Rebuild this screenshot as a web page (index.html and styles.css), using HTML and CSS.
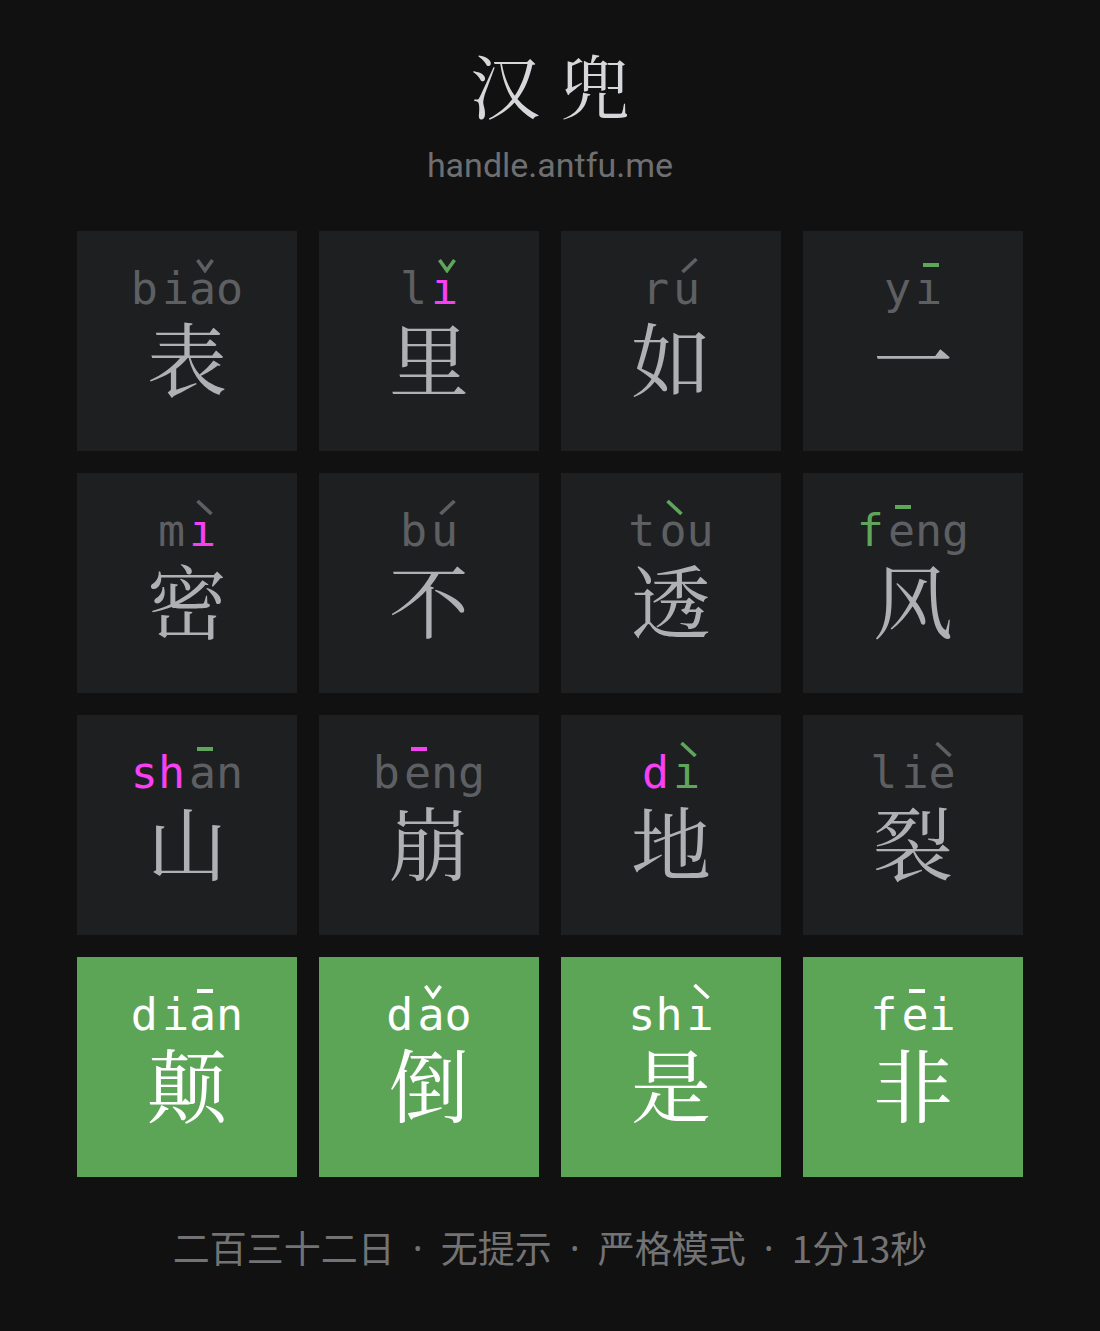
FILE: index.html
```html
<!DOCTYPE html>
<html lang="zh-CN">
<head>
<meta charset="utf-8">
<title>汉兜</title>
<link rel="stylesheet" href="styles.css">
</head>
<body>
<main class="app">
  <header class="head">
    <h1 class="title">汉兜</h1>
    <p class="site">handle.antfu.me</p>
  </header>

  <section class="board">
    <!-- row 1 -->
    <div class="tile">
      <div class="py">
        <span class="ini"><span class="l">b</span></span><span class="fin"><span class="l">i</span><span class="l">a<span class="tone c-gray"><svg viewBox="0 0 18 15"><polyline points="1.5,2 9,12.5 16.5,2"/></svg></span></span><span class="l">o</span></span>
      </div>
      <div class="hz">表</div>
    </div>
    <div class="tile">
      <div class="py">
        <span class="ini"><span class="l">l</span></span><span class="fin"><span class="l c-pink">ı<span class="tone c-green"><svg viewBox="0 0 18 15"><polyline points="1.5,2 9,12.5 16.5,2"/></svg></span></span></span>
      </div>
      <div class="hz">里</div>
    </div>
    <div class="tile">
      <div class="py">
        <span class="ini"><span class="l">r</span></span><span class="fin"><span class="l">u<span class="tone c-gray"><svg viewBox="0 0 18 15"><line x1="2.5" y1="14" x2="16.5" y2="1"/></svg></span></span></span>
      </div>
      <div class="hz">如</div>
    </div>
    <div class="tile">
      <div class="py">
        <span class="ini"><span class="l">y</span></span><span class="fin"><span class="l">ı<span class="tone c-green"><svg viewBox="0 0 18 15"><line x1="1" y1="7" x2="17" y2="7" class="bar"/></svg></span></span></span>
      </div>
      <div class="hz">一</div>
    </div>

    <!-- row 2 -->
    <div class="tile">
      <div class="py">
        <span class="ini"><span class="l">m</span></span><span class="fin"><span class="l c-pink">ı<span class="tone c-gray"><svg viewBox="0 0 18 15"><line x1="1.5" y1="1" x2="15.5" y2="14"/></svg></span></span></span>
      </div>
      <div class="hz">密</div>
    </div>
    <div class="tile">
      <div class="py">
        <span class="ini"><span class="l">b</span></span><span class="fin"><span class="l">u<span class="tone c-gray"><svg viewBox="0 0 18 15"><line x1="2.5" y1="14" x2="16.5" y2="1"/></svg></span></span></span>
      </div>
      <div class="hz">不</div>
    </div>
    <div class="tile">
      <div class="py">
        <span class="ini"><span class="l">t</span></span><span class="fin"><span class="l">o<span class="tone c-green"><svg viewBox="0 0 18 15"><line x1="1.5" y1="1" x2="15.5" y2="14"/></svg></span></span><span class="l">u</span></span>
      </div>
      <div class="hz">透</div>
    </div>
    <div class="tile">
      <div class="py">
        <span class="ini"><span class="l c-green">f</span></span><span class="fin"><span class="l">e<span class="tone c-green"><svg viewBox="0 0 18 15"><line x1="1" y1="7" x2="17" y2="7" class="bar"/></svg></span></span><span class="l">n</span><span class="l">g</span></span>
      </div>
      <div class="hz">风</div>
    </div>

    <!-- row 3 -->
    <div class="tile">
      <div class="py">
        <span class="ini"><span class="l c-pink">s</span><span class="l c-pink">h</span></span><span class="fin"><span class="l">a<span class="tone c-green"><svg viewBox="0 0 18 15"><line x1="1" y1="7" x2="17" y2="7" class="bar"/></svg></span></span><span class="l">n</span></span>
      </div>
      <div class="hz">山</div>
    </div>
    <div class="tile">
      <div class="py">
        <span class="ini"><span class="l">b</span></span><span class="fin"><span class="l">e<span class="tone c-pink"><svg viewBox="0 0 18 15"><line x1="1" y1="7" x2="17" y2="7" class="bar"/></svg></span></span><span class="l">n</span><span class="l">g</span></span>
      </div>
      <div class="hz">崩</div>
    </div>
    <div class="tile">
      <div class="py">
        <span class="ini"><span class="l c-pink">d</span></span><span class="fin"><span class="l c-green">ı<span class="tone c-green"><svg viewBox="0 0 18 15"><line x1="1.5" y1="1" x2="15.5" y2="14"/></svg></span></span></span>
      </div>
      <div class="hz">地</div>
    </div>
    <div class="tile">
      <div class="py">
        <span class="ini"><span class="l">l</span></span><span class="fin"><span class="l">i</span><span class="l">e<span class="tone c-gray"><svg viewBox="0 0 18 15"><line x1="1.5" y1="1" x2="15.5" y2="14"/></svg></span></span></span>
      </div>
      <div class="hz">裂</div>
    </div>

    <!-- row 4: answer -->
    <div class="tile ok">
      <div class="py">
        <span class="ini"><span class="l">d</span></span><span class="fin"><span class="l">i</span><span class="l">a<span class="tone"><svg viewBox="0 0 18 15"><line x1="1" y1="7" x2="17" y2="7" class="bar"/></svg></span></span><span class="l">n</span></span>
      </div>
      <div class="hz">颠</div>
    </div>
    <div class="tile ok">
      <div class="py">
        <span class="ini"><span class="l">d</span></span><span class="fin"><span class="l">a<span class="tone"><svg viewBox="0 0 18 15"><polyline points="1.5,2 9,12.5 16.5,2"/></svg></span></span><span class="l">o</span></span>
      </div>
      <div class="hz">倒</div>
    </div>
    <div class="tile ok">
      <div class="py">
        <span class="ini"><span class="l">s</span><span class="l">h</span></span><span class="fin"><span class="l">ı<span class="tone"><svg viewBox="0 0 18 15"><line x1="1.5" y1="1" x2="15.5" y2="14"/></svg></span></span></span>
      </div>
      <div class="hz">是</div>
    </div>
    <div class="tile ok">
      <div class="py">
        <span class="ini"><span class="l">f</span></span><span class="fin"><span class="l">e<span class="tone"><svg viewBox="0 0 18 15"><line x1="1" y1="7" x2="17" y2="7" class="bar"/></svg></span></span><span class="l">i</span></span>
      </div>
      <div class="hz">非</div>
    </div>
  </section>

  <footer class="foot"><span>二百三十二日</span><span class="sep">·</span><span>无提示</span><span class="sep">·</span><span>严格模式</span><span class="sep">·</span><span>1分13秒</span></footer>
</main>
</body>
</html>
```

FILE: styles.css
```css
html, body {
  margin: 0;
  padding: 0;
  background: #111111;
}

.app {
  width: 1100px;
  min-height: 1331px;
  display: flex;
  flex-direction: column;
  align-items: center;
  font-family: "Noto Sans", "Noto Sans CJK SC", sans-serif;
}

.head {
  display: flex;
  flex-direction: column;
  align-items: center;
  padding-top: 46px;
}

.title {
  margin: 0 -20px 0 0;
  font-family: "Noto Serif CJK SC", "Source Han Serif SC", "AR PL UMing CN", "Noto Sans CJK SC", serif;
  font-weight: 400;
  font-size: 70px;
  line-height: 76px;
  letter-spacing: 20px;
  color: #d6d7da;
}

.site {
  margin: 23px 0 0;
  font-family: Roboto, "Noto Sans", sans-serif;
  font-size: 34px;
  line-height: 40px;
  color: #6e6f71;
}

.board {
  margin-top: 46px;
  display: grid;
  grid-template-columns: repeat(4, 220px);
  grid-auto-rows: 220px;
  gap: 22px;
}

.tile {
  background: #1e1f21;
  display: flex;
  flex-direction: column;
  align-items: center;
  padding-top: 35px;
  box-sizing: border-box;
  color: #5e5f62;
}

.tile.ok {
  background: #5ca556;
  color: #ffffff;
}

.py {
  display: flex;
  font-family: "DejaVu Sans Mono", monospace;
  font-size: 45px;
  line-height: 46px;
  height: 46px;
}

.ini {
  display: flex;
  margin-right: 4px;
}

.fin {
  display: flex;
}

.l {
  position: relative;
  display: inline-block;
}

.tone {
  position: absolute;
  top: -8px;
  left: 50%;
  margin-left: -7px;
  width: 18px;
  height: 15px;
}

.tone svg {
  display: block;
  width: 18px;
  height: 15px;
  fill: none;
  stroke: currentColor;
  stroke-width: 3.6;
  stroke-linecap: butt;
}

.tone svg .bar {
  stroke-width: 4;
}

.c-gray { color: #5e5f62; }
.c-pink { color: #f73ff3; }
.c-green { color: #5ea75a; }

.hz {
  margin-top: 4px;
  font-family: "Noto Serif CJK SC", "Source Han Serif SC", "AR PL UMing CN", "Noto Sans CJK SC", serif;
  font-size: 80px;
  line-height: 80px;
  color: #aeb0b4;
}

.tile.ok .hz {
  color: #ffffff;
}

.foot {
  margin-top: 46px;
  display: flex;
  font-family: "Noto Sans CJK SC", sans-serif;
  font-size: 37px;
  line-height: 48px;
  color: #737375;
}

.sep {
  width: 46px;
  text-align: center;
  font-family: "Noto Sans", sans-serif;
}
```
